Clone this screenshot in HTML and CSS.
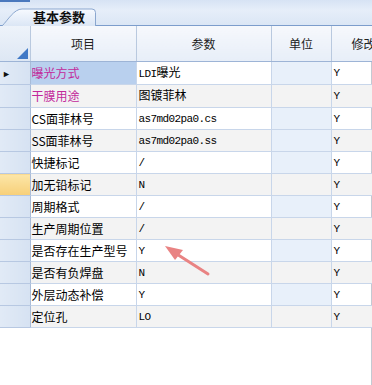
FILE: index.html
```html
<!DOCTYPE html>
<html>
	<head>
		<meta charset="UTF-8">
		<title>基本参数</title>
		<link rel="stylesheet" href="styles.css">
	</head>
	<body>
		<div class="page">
			<div class="tab-bar">
				<div class="tab-corner"></div>
				<div class="tab">
					<svg class="tab-shape" width="100" height="22" viewBox="0 0 100 22">
						<defs>
							<linearGradient id="tabg" x1="0" y1="0" x2="0" y2="1">
								<stop offset="0" stop-color="#f7faff"/>
								<stop offset="1" stop-color="#dbe6f5"/>
							</linearGradient>
						</defs>
						<path d="M2 22 C8 16 14 5 22 5 L92 5 Q95.5 5 95.5 8.5 L95.5 22" fill="url(#tabg)" stroke="#8ba7cf"/>
					</svg>
					<span class="tab-text">基本参数</span>
				</div>
			</div>
			<div class="grid-wrap">
				<table class="grid">
					<colgroup>
						<col class="c-rh">
						<col class="c-name">
						<col class="c-val">
						<col class="c-unit">
						<col class="c-edit">
					</colgroup>
					<thead>
						<tr>
							<th class="corner"><span class="corner-tri"></span></th>
							<th>项目</th>
							<th>参数</th>
							<th>单位</th>
							<th class="left">修改</th>
						</tr>
					</thead>
					<tbody>
						<tr>
							<td class="rh"><span class="mark">&#9658;</span></td>
							<td class="name pink sel">曝光方式</td>
							<td class="val">LDI<span class="cn">曝光</span></td>
							<td class="unit"></td>
							<td class="val">Y</td>
						</tr>
						<tr class="alt">
							<td class="rh"></td>
							<td class="name pink">干膜用途</td>
							<td class="val"><span class="cn">图镀菲林</span></td>
							<td class="unit"></td>
							<td class="val">Y</td>
						</tr>
						<tr>
							<td class="rh"></td>
							<td class="name">CS面菲林号</td>
							<td class="val">as7md02pa0.cs</td>
							<td class="unit"></td>
							<td class="val">Y</td>
						</tr>
						<tr class="alt">
							<td class="rh"></td>
							<td class="name">SS面菲林号</td>
							<td class="val">as7md02pa0.ss</td>
							<td class="unit blue"></td>
							<td class="val">Y</td>
						</tr>
						<tr>
							<td class="rh"></td>
							<td class="name">快捷标记</td>
							<td class="val">/</td>
							<td class="unit"></td>
							<td class="val">Y</td>
						</tr>
						<tr class="alt">
							<td class="rh cur"></td>
							<td class="name">加无铅标记</td>
							<td class="val">N</td>
							<td class="unit"></td>
							<td class="val">Y</td>
						</tr>
						<tr>
							<td class="rh"></td>
							<td class="name">周期格式</td>
							<td class="val">/</td>
							<td class="unit"></td>
							<td class="val">Y</td>
						</tr>
						<tr class="alt">
							<td class="rh"></td>
							<td class="name">生产周期位置</td>
							<td class="val">/</td>
							<td class="unit"></td>
							<td class="val">Y</td>
						</tr>
						<tr>
							<td class="rh"></td>
							<td class="name">是否存在生产型号</td>
							<td class="val">Y</td>
							<td class="unit"></td>
							<td class="val">Y</td>
						</tr>
						<tr class="alt">
							<td class="rh"></td>
							<td class="name">是否有负焊盘</td>
							<td class="val">N</td>
							<td class="unit"></td>
							<td class="val">Y</td>
						</tr>
						<tr>
							<td class="rh"></td>
							<td class="name">外层动态补偿</td>
							<td class="val">Y</td>
							<td class="unit"></td>
							<td class="val">Y</td>
						</tr>
						<tr class="alt">
							<td class="rh"></td>
							<td class="name">定位孔</td>
							<td class="val">LO</td>
							<td class="unit"></td>
							<td class="val">Y</td>
						</tr>
					</tbody>
				</table>
				<!-- 标注箭头 -->
				<svg class="arrow" width="60" height="40" viewBox="0 0 60 40">
					<line x1="8" y1="6" x2="44" y2="29" stroke="#e98383" stroke-width="3" stroke-linecap="round"/>
					<polygon points="1,1 19,5 11,15" fill="#e98383"/>
				</svg>
			</div>
		</div>
	</body>
</html>
```

FILE: styles.css
```css
*{
	margin: 0;
	padding: 0;
}
body{
	background: #fff;
	font-family: "Noto Sans CJK SC", "Liberation Sans", sans-serif;
	font-size: 12px;
	color: #000;
}
.page{
	width: 372px;
	height: 385px;
	overflow: hidden;
}
.tab-bar{
	height: 25px;
	border-bottom: 1px solid #7c9dcc;
	background: linear-gradient(#d7e3f4, #e6eef9 40%, #dbe6f5);
	display: flex;
	align-items: flex-end;
	position: relative;
}
.tab-corner{
	position: absolute;
	left: 0;
	top: 0;
	width: 30px;
	height: 2px;
	background: #4a78bd;
}
.tab{
	width: 100px;
	height: 22px;
	position: relative;
	margin-bottom: -1px;
}
.tab-shape{
	display: block;
}
.tab-text{
	position: absolute;
	left: 33px;
	top: 4px;
	font-size: 13px;
	font-weight: bold;
	line-height: 18px;
	color: #111;
}
.grid-wrap{
	position: relative;
	height: 359px;
	border-right: 1px solid #c4c9d2;
	box-sizing: border-box;
}
.grid{
	border-collapse: collapse;
	table-layout: fixed;
	width: 401px;
}
.c-rh{ width: 30px; }
.c-name{ width: 106px; }
.c-val{ width: 135px; }
.c-unit{ width: 60px; }
.c-edit{ width: 70px; }
.grid th{
	height: 35px;
	font-weight: normal;
	font-size: 12px;
	background: linear-gradient(#f6f8fc, #e7eef8);
	border-right: 1px solid #b9c9df;
	border-bottom: 1px solid #9db4d6;
	text-align: center;
	padding: 0;
	color: #222;
}
.grid th.left{
	text-align: left;
	padding-left: 20px;
}
.grid th.corner{
	position: relative;
	background: linear-gradient(#eef3fa, #dde7f4);
}
.corner-tri{
	position: absolute;
	right: 2px;
	bottom: 2px;
	width: 0;
	height: 0;
	border-left: 11px solid transparent;
	border-bottom: 11px solid #3f78c6;
}
.grid td{
	height: 21px;
	padding: 0 0 0 1px;
	border-right: 1px solid #c8d6ea;
	border-bottom: 1px solid #c8d6ea;
	white-space: nowrap;
	overflow: hidden;
	line-height: 20px;
}
.grid tr.alt td{
	background: #f3f3f3;
}
.grid td.rh,
.grid tr.alt td.rh{
	background: linear-gradient(90deg, #e1eaf6, #d6e2f2);
	border-right: 1px solid #a9bcd8;
	border-bottom: 1px solid #b7c8e2;
	padding: 0;
}
.grid tr.alt td.cur{
	background: linear-gradient(#fce6a8, #f7cf78);
}
.mark{
	font-size: 9px;
	padding-left: 2px;
	color: #111;
}
.grid td.sel{
	background: #b9d0ee;
}
.pink{
	color: #c2299b;
}
.grid td.val{
	font-family: "Liberation Mono", monospace;
	font-size: 11px;
	letter-spacing: -0.6px;
	padding-left: 2px;
}
.cn{
	font-family: "Noto Sans CJK SC", sans-serif;
	font-size: 12px;
	letter-spacing: 0;
}
.grid td.unit,
.grid tr.alt td.blue{
	background: #e8f0fa;
}
.arrow{
	position: absolute;
	left: 164px;
	top: 219px;
}
```
